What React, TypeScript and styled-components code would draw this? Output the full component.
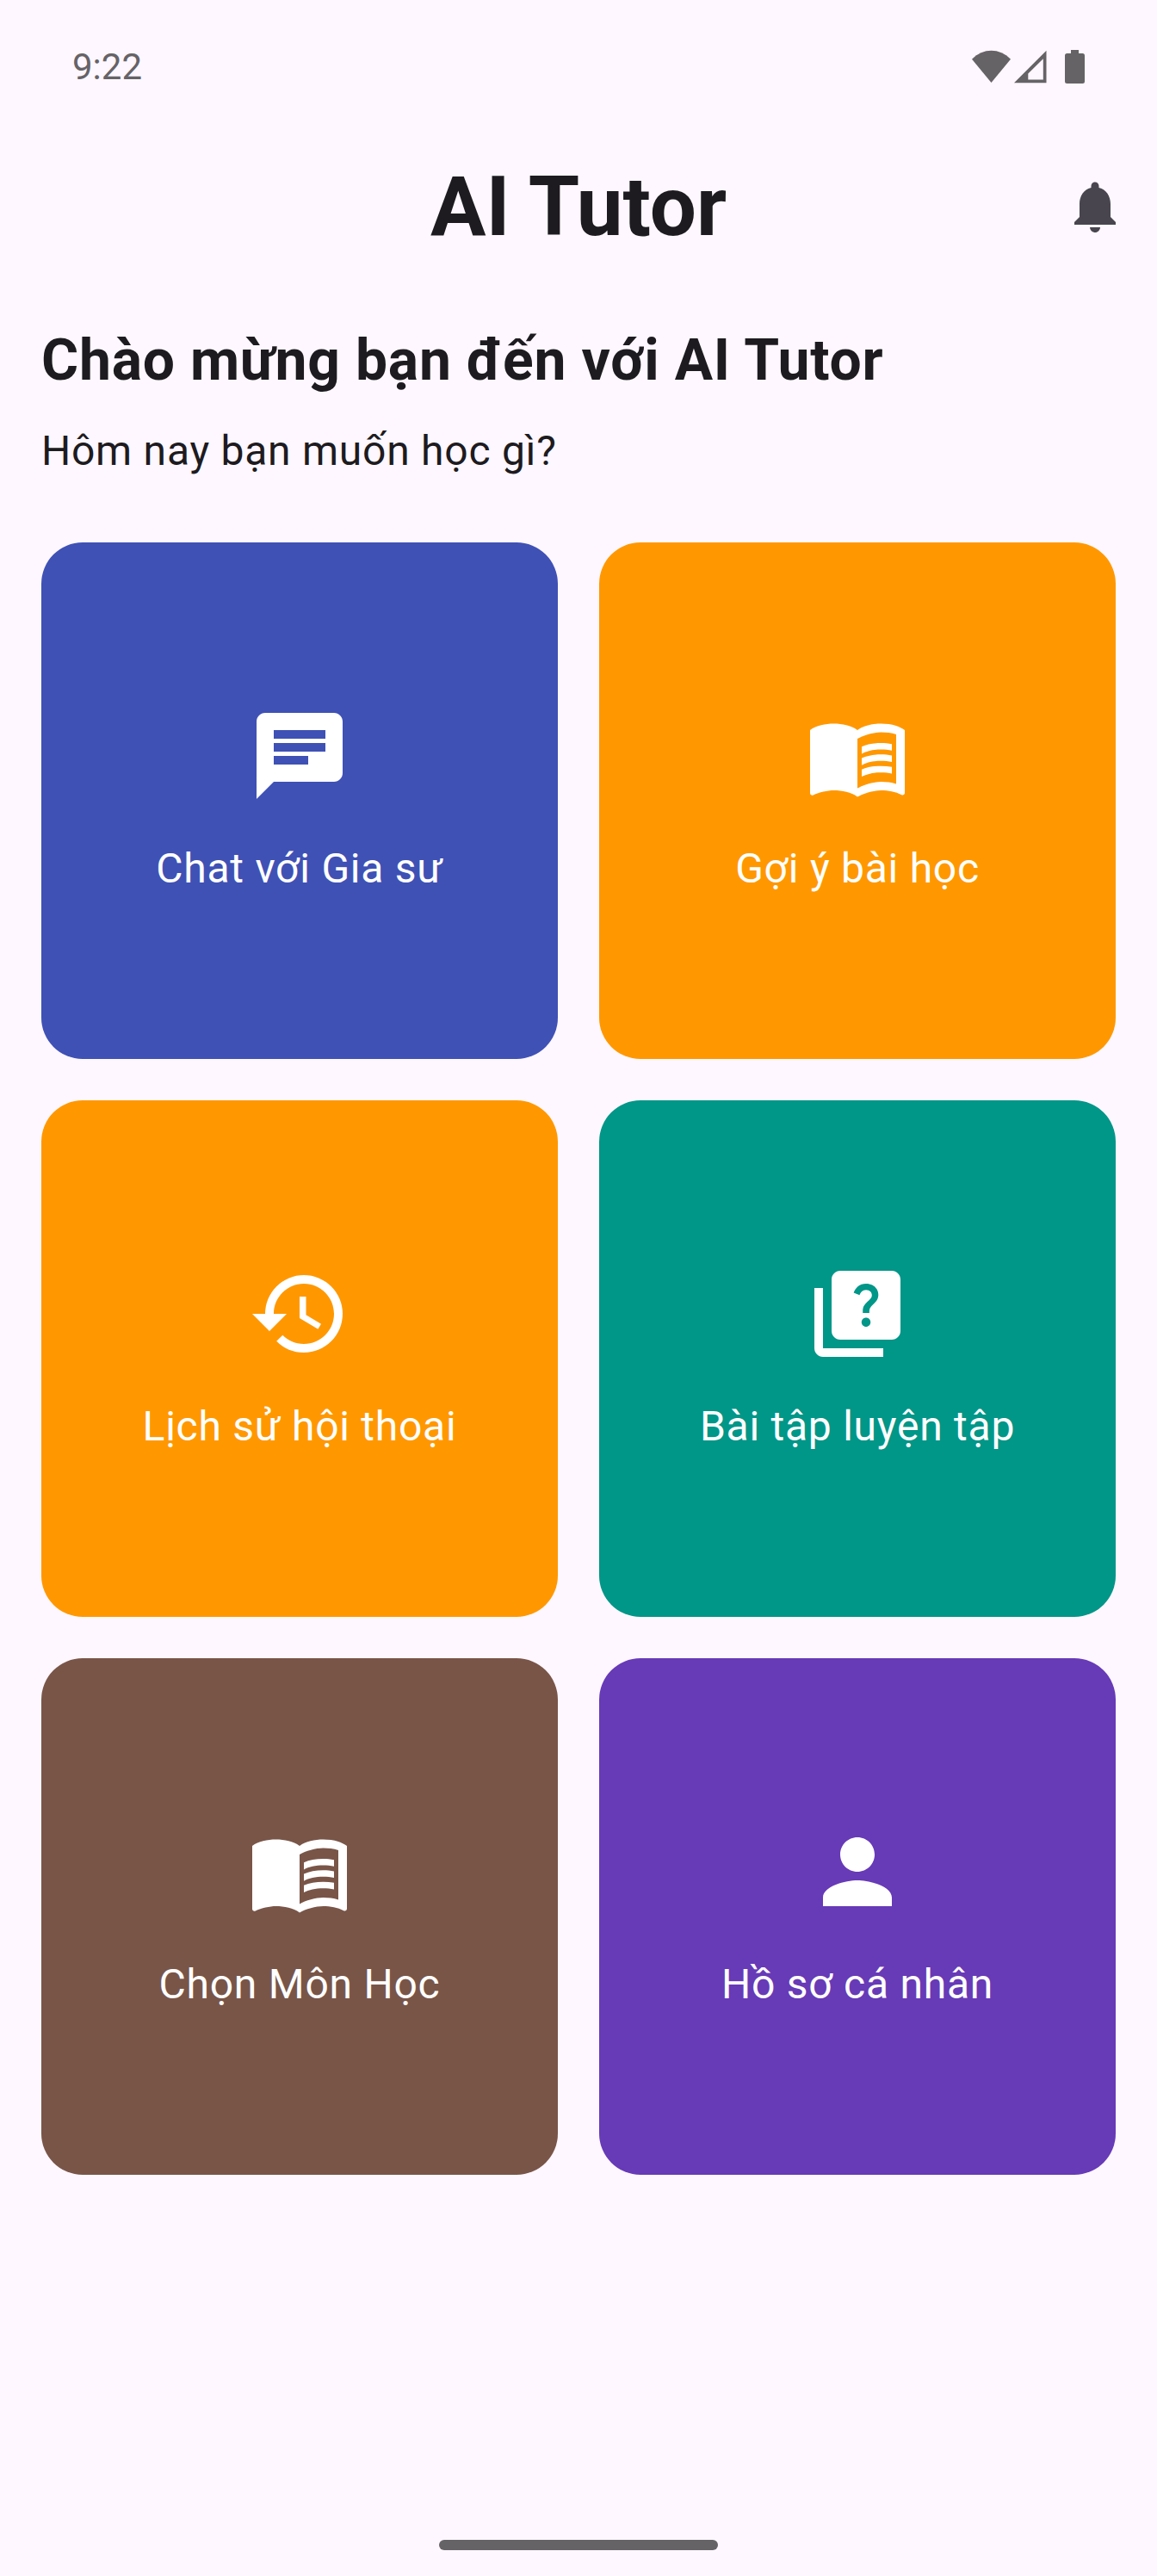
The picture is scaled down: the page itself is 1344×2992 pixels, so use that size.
import React from "react";
import styled, { createGlobalStyle } from "styled-components";
import type { IconType } from "react-icons";
import {
  MdChat,
  MdHistory,
  MdMenuBook,
  MdNotifications,
  MdPerson,
  MdQuiz,
} from "react-icons/md";

const GlobalStyle = createGlobalStyle`
  * { box-sizing: border-box; }
  body {
    margin: 0;
    background: #fef7ff;
    font-family: Roboto, "Noto Sans", sans-serif;
    color: #1d1b20;
  }
`;

const Screen = styled.div`
  display: flex;
  flex-direction: column;
  width: 1344px;
  height: 2992px;
  background: #fef7ff;
`;

const StatusBar = styled.div`
  display: flex;
  align-items: center;
  justify-content: space-between;
  height: 156px;
  padding: 0 84px;
  color: #666367;
`;

const Clock = styled.time`
  font-size: 42px;
  line-height: 48px;
`;

const StatusIcons = styled.svg`
  display: block;
  width: 131px;
  height: 40px;
  fill: currentColor;
`;

const AppBar = styled.header`
  display: grid;
  grid-template-columns: 1fr auto 1fr;
  align-items: center;
  height: 168px;
  padding: 0 36px;
`;

const Title = styled.h1`
  grid-column: 2;
  margin: 0;
  font-size: 96px;
  font-weight: 700;
  line-height: 122px;
`;

const BellButton = styled.button`
  display: flex;
  justify-self: end;
  padding: 0;
  border: 0;
  background: none;
  color: #49454f;
  font-size: 72px;
`;

const Body = styled.main`
  flex: 1;
  padding: 48px;
`;

const Greeting = styled.h2`
  margin: 0 0 24px;
  font-size: 66px;
  font-weight: 700;
  line-height: 94px;
  letter-spacing: 0.75px;
`;

const Prompt = styled.p`
  margin: 0 0 72px;
  font-size: 48px;
  line-height: 68px;
  letter-spacing: 0.75px;
`;

const CardGrid = styled.div`
  display: grid;
  grid-template-columns: repeat(2, 600px);
  grid-auto-rows: 600px;
  gap: 48px;
`;

const Card = styled.div<{ $color: string }>`
  display: flex;
  flex-direction: column;
  align-items: center;
  justify-content: center;
  gap: 36px;
  border-radius: 48px;
  background: ${(p) => p.$color};
  color: #fff;

  svg {
    font-size: 120px;
  }
`;

const CardLabel = styled.span`
  margin: 1px 0 -1px;
  font-size: 48px;
  line-height: 68px;
  letter-spacing: 0.75px;
  white-space: nowrap;
`;

const NavigationBar = styled.footer`
  display: flex;
  justify-content: center;
  height: 72px;
  padding-top: 30px;
`;

const HomeIndicator = styled.div`
  width: 324px;
  height: 12px;
  border-radius: 6px;
  background: #666367;
`;

const features: { label: string; color: string; icon: IconType }[] = [
  { label: "Chat với Gia sư", color: "#3f51b5", icon: MdChat },
  { label: "Gợi ý bài học", color: "#ff9800", icon: MdMenuBook },
  { label: "Lịch sử hội thoại", color: "#ff9800", icon: MdHistory },
  { label: "Bài tập luyện tập", color: "#009688", icon: MdQuiz },
  { label: "Chọn Môn Học", color: "#795548", icon: MdMenuBook },
  { label: "Hồ sơ cá nhân", color: "#673ab7", icon: MdPerson },
];

export default function App() {
  return (
    <Screen>
      <GlobalStyle />
      <StatusBar>
        <Clock>9:22</Clock>
        <StatusIcons viewBox="0 0 131 40" aria-hidden="true">
          <path d="M0 10.700C13-2.600 32-2.600 45 10.700L22.500 38Z" />
          <path
            fillRule="evenodd"
            d="M49 38.300L86.500 0.800V38.300ZM65.300 34.500H82.800V10.200L65.300 27.500Z"
          />
          <path d="M115 0H124V4H128.500Q131 4 131 6.500V36.500Q131 39 128.500 39H110.500Q108 39 108 36.500V6.500Q108 4 110.500 4H115Z" />
        </StatusIcons>
      </StatusBar>
      <AppBar>
        <Title>AI Tutor</Title>
        <BellButton aria-label="Thông báo">
          <MdNotifications />
        </BellButton>
      </AppBar>
      <Body>
        <Greeting>Chào mừng bạn đến với AI Tutor</Greeting>
        <Prompt>Hôm nay bạn muốn học gì?</Prompt>
        <CardGrid>
          {features.map(({ label, color, icon: Icon }) => (
            <Card key={label} $color={color}>
              <Icon />
              <CardLabel>{label}</CardLabel>
            </Card>
          ))}
        </CardGrid>
      </Body>
      <NavigationBar>
        <HomeIndicator />
      </NavigationBar>
    </Screen>
  );
}
